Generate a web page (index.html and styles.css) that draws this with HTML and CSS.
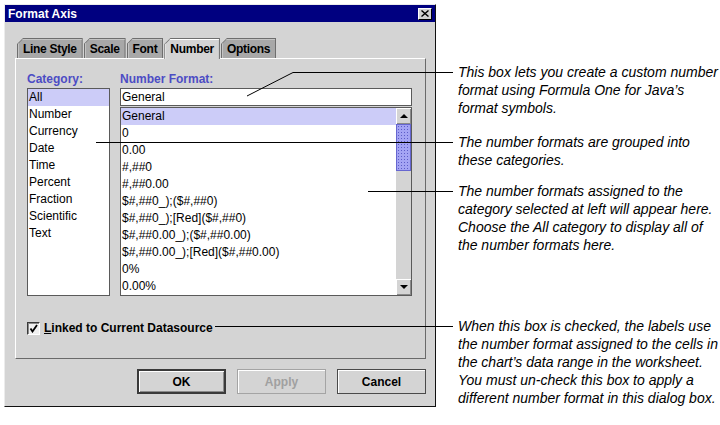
FILE: index.html
```html
<!DOCTYPE html>
<html lang="en">
<head>
    <meta charset="UTF-8">
    <title>Format Axis</title>
    <link rel="stylesheet" href="styles.css">
</head>
<body>
    <div class="page">
        <!-- Dialog window -->
        <div class="dialog">
            <div class="titlebar">
                <span class="title">Format Axis</span>
                <span class="close">
                    <svg width="8" height="7" viewBox="0 0 8 7"><path d="M0.5 0.5 L7.5 6.5 M7.5 0.5 L0.5 6.5" stroke="#000" stroke-width="1.4" fill="none"/></svg>
                </span>
            </div>

            <div class="dialog-body">
                <div class="tabs">
                    <div class="tab"><span>Line Style</span></div>
                    <div class="tab"><span>Scale</span></div>
                    <div class="tab"><span>Font</span></div>
                    <div class="tab selected"><span>Number</span></div>
                    <div class="tab"><span>Options</span></div>
                </div>

                <div class="panel">
                    <div class="columns">
                        <div class="col-category">
                            <div class="field-label">Category:</div>
                            <ul class="list category-list">
                                <li class="sel">All</li>
                                <li>Number</li>
                                <li>Currency</li>
                                <li>Date</li>
                                <li>Time</li>
                                <li>Percent</li>
                                <li>Fraction</li>
                                <li>Scientific</li>
                                <li>Text</li>
                            </ul>
                        </div>
                        <div class="col-format">
                            <div class="field-label">Number Format:</div>
                            <div class="text-field">General</div>
                            <div class="list format-list">
                                <ul>
                                    <li class="sel">General</li>
                                    <li>0</li>
                                    <li>0.00</li>
                                    <li>#,##0</li>
                                    <li>#,##0.00</li>
                                    <li>$#,##0_);($#,##0)</li>
                                    <li>$#,##0_);[Red]($#,##0)</li>
                                    <li>$#,##0.00_);($#,##0.00)</li>
                                    <li>$#,##0.00_);[Red]($#,##0.00)</li>
                                    <li>0%</li>
                                    <li>0.00%</li>
                                </ul>
                                <div class="scrollbar">
                                    <div class="arrow"><span class="tri-up"></span></div>
                                    <div class="track"><div class="thumb"></div></div>
                                    <div class="arrow"><span class="tri-down"></span></div>
                                </div>
                            </div>
                        </div>
                    </div>

                    <div class="check-row">
                        <span class="checkbox">
                            <svg width="9" height="9" viewBox="0 0 9 9"><path d="M1.5 4.5 L3.5 7.5 L8 1" stroke="#000" stroke-width="1.8" fill="none"/></svg>
                        </span>
                        <span class="check-label"><u>L</u>inked to Current Datasource</span>
                    </div>
                </div>

                <div class="buttons">
                    <button class="btn default">OK</button>
                    <button class="btn disabled">Apply</button>
                    <button class="btn">Cancel</button>
                </div>
            </div>
        </div>

        <!-- Callout notes -->
        <div class="notes">
            <p class="note note-1">This box lets you create a custom number<br>format using Formula One for Java’s<br>format symbols.</p>
            <p class="note note-2">The number formats are grouped into<br>these categories.</p>
            <p class="note note-3">The number formats assigned to the<br>category selected at left will appear here.<br>Choose the All category to display all of<br>the number formats here.</p>
            <p class="note note-4">When this box is checked, the labels use<br>the number format assigned to the cells in<br>the chart’s data range in the worksheet.<br>You must un-check this box to apply a<br>different number format in this dialog box.</p>
        </div>

        <!-- Leader lines drawn over the dialog -->
        <svg class="leaders" width="720" height="425" viewBox="0 0 720 425">
            <polyline points="247,96 293,72.5 453,72.5" fill="none" stroke="#000" stroke-width="1"/>
            <line x1="96" y1="142.5" x2="453" y2="142.5" stroke="#000" stroke-width="1"/>
            <line x1="368" y1="191.5" x2="453" y2="191.5" stroke="#000" stroke-width="1"/>
            <line x1="215" y1="326.5" x2="453" y2="326.5" stroke="#000" stroke-width="1"/>
        </svg>
    </div>
</body>
</html>
```

FILE: styles.css
```css
/* Format Axis dialog with callout notes */
body {
    margin: 0;
    background-color: #fff;
    font-family: "Liberation Sans", Arial, sans-serif;
}
.page {
    position: relative;
    display: flex;
    align-items: flex-start;
    width: 720px;
    height: 425px;
    padding: 4px 0 0 4px;
    box-sizing: border-box;
}

/* Dialog frame */
.dialog {
    width: 432px;
    height: 403px;
    box-sizing: border-box;
    border: 1px solid;
    border-color: #ececec #111 #111 #ececec;
    background-color: #d4d4d4;
    display: flex;
    flex-direction: column;
}
.titlebar {
    height: 17px;
    background-color: #000080;
    color: #fff;
    display: flex;
    align-items: center;
    justify-content: space-between;
    padding: 0 3px;
    font-size: 12px;
    font-weight: bold;
}
.close {
    width: 14px;
    height: 12px;
    box-sizing: border-box;
    border: 1px solid;
    border-color: #fff #000 #000 #fff;
    background-color: #d4d4d4;
    display: flex;
    align-items: center;
    justify-content: center;
}
.dialog-body {
    padding: 16px 9px 0 10px;
}

/* Tabs */
.tabs {
    display: flex;
    padding-left: 2px;
    height: 20px;
}
.tab {
    margin-right: 1px;
    height: 20px;
    box-sizing: border-box;
    padding: 1px 1px 0 1px;
    background-color: #6e6e6e;
    clip-path: polygon(6px 0, 100% 0, 100% 100%, 0 100%, 0 6px);
}
.tab span {
    display: block;
    height: 19px;
    line-height: 20px;
    padding: 0 5px;
    font-size: 12px;
    font-weight: bold;
    letter-spacing: -0.3px;
    background-color: #a8a8a8;
    box-shadow: inset 1px 1px 0 #c4c4c4;
    clip-path: polygon(5px 0, 100% 0, 100% 100%, 0 100%, 0 5px);
}
.tab.selected {
    position: relative;
    z-index: 1;
    height: 21px;
    margin-bottom: -1px;
}
.tab.selected span {
    height: 20px;
    background-color: #d4d4d4;
    box-shadow: inset 1px 1px 0 #fff;
}

/* Tab panel */
.panel {
    width: 411px;
    height: 301px;
    box-sizing: border-box;
    border: 1px solid;
    border-color: #fff #6a6a6a #6a6a6a #fff;
    padding: 13px 0 0 11px;
}
.columns {
    display: flex;
    gap: 10px;
}
.col-category {
    width: 83px;
}
.col-format {
    width: 292px;
}
.field-label {
    height: 16px;
    line-height: 14px;
    font-size: 12px;
    font-weight: bold;
    color: #4c4cc4;
}
.list {
    margin: 0;
    padding: 0;
    list-style: none;
    background-color: #fff;
    border: 1px solid #5a5a5a;
    box-sizing: border-box;
}
.list ul {
    margin: 0;
    padding: 0;
    list-style: none;
    flex: 1;
}
.list li {
    height: 17px;
    line-height: 17px;
    padding-left: 1px;
    font-size: 12px;
    white-space: nowrap;
}
.list li.sel {
    background-color: #ccccf8;
}
.category-list {
    height: 208px;
}
.text-field {
    height: 18px;
    line-height: 17px;
    margin-bottom: 1px;
    padding-left: 1px;
    box-sizing: border-box;
    border: 1px solid #5a5a5a;
    background-color: #fff;
    font-size: 12px;
}
.format-list {
    height: 189px;
    display: flex;
}

/* Scrollbar */
.scrollbar {
    width: 15px;
    display: flex;
    flex-direction: column;
    background-color: #d4d4d4;
}
.arrow {
    height: 16px;
    box-shadow: inset 1px 1px 0 #fff, inset -1px -1px 0 #8a8a8a;
    display: flex;
    align-items: center;
    justify-content: center;
}
.tri-up {
    border-left: 4px solid transparent;
    border-right: 4px solid transparent;
    border-bottom: 4px solid #000;
}
.tri-down {
    border-left: 4px solid transparent;
    border-right: 4px solid transparent;
    border-top: 4px solid #000;
}
.track {
    flex: 1;
}
.thumb {
    height: 47px;
    box-sizing: border-box;
    border: 1px solid #6666d0;
    background-color: #a4a4f4;
    background-image: radial-gradient(#5c5cc8 0.7px, transparent 0.9px);
    background-size: 3px 3px;
}

/* Checkbox row */
.check-row {
    display: flex;
    align-items: center;
    gap: 4px;
    margin-top: 25px;
    font-size: 12px;
    font-weight: bold;
}
.checkbox {
    width: 13px;
    height: 13px;
    box-sizing: border-box;
    border: 1px solid;
    border-color: #3a3a3a #fff #fff #3a3a3a;
    box-shadow: inset 1px 1px 0 #8a8a8a;
    background-color: #f0f0f0;
    display: flex;
    align-items: center;
    justify-content: center;
}

/* Buttons */
.buttons {
    width: 411px;
    display: flex;
    justify-content: flex-end;
    gap: 11px;
    margin-top: 10px;
}
.btn {
    width: 89px;
    height: 25px;
    padding: 0;
    font-family: "Liberation Sans", Arial, sans-serif;
    font-size: 12px;
    font-weight: bold;
    color: #000;
    background-color: #d4d4d4;
    border: 1px solid #4a4a4a;
    box-shadow: inset 1px 1px 0 #fff;
}
.btn.default {
    border: 2px solid #3a3a3a;
    box-shadow: inset 1px 1px 0 #fff, inset -1px -1px 0 #8a8a8a;
}
.btn.disabled {
    color: #a0a0a0;
    border-color: #a4a4a4;
}

/* Callout notes */
.notes {
    margin-left: 22px;
    font-family: "Liberation Sans", Arial, sans-serif;
    font-size: 14px;
    font-style: italic;
    line-height: 18px;
    white-space: nowrap;
}
.note {
    margin: 0;
}
.note-1 { margin-top: 59px; }
.note-2 { margin-top: 16px; }
.note-3 { margin-top: 13px; }
.note-4 { margin-top: 63px; }

.leaders {
    position: absolute;
    left: 0;
    top: 0;
    pointer-events: none;
}
```
